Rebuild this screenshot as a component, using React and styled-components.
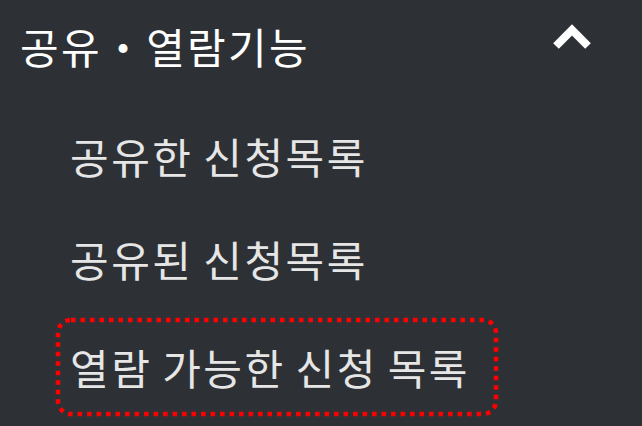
import React from "react";
import styled, { createGlobalStyle } from "styled-components";

const GlobalStyle = createGlobalStyle`
  html, body {
    margin: 0;
    padding: 0;
    background: #2d3135;
  }
  body {
    font-family: "Noto Sans CJK KR", "Noto Sans", sans-serif;
  }
`;

const Menu = styled.nav`
  width: 642px;
  height: 426px;
  background: #2d3135;
  overflow: hidden;
`;

const Header = styled.div`
  display: flex;
  align-items: center;
  justify-content: space-between;
  height: 92px;
  padding: 0 50px 0 20px;
`;

const Title = styled.span`
  color: #ffffff;
  font-size: 42px;
  line-height: 1;
  letter-spacing: 2.3px;
`;

const Chevron = styled.svg`
  width: 40px;
  height: 30px;
  margin-bottom: 22px;
`;

const List = styled.ul`
  list-style: none;
  margin: 0;
  padding: 12px 0 0 56px;
`;

const Item = styled.li`
  position: relative;
  box-sizing: border-box;
  display: flex;
  align-items: center;
  width: 442px;
  height: ${p => (p.$active ? "98px" : "103px")};
  margin-top: ${p => (p.$active ? "8px" : "0")};
  padding-left: 14px;
  color: #e6e6e6;
  font-size: 42px;
  line-height: 1;
  letter-spacing: 2.5px;
  word-spacing: -2px;
  white-space: pre;
`;

const Dotted = styled.svg`
  position: absolute;
  inset: 0;
  width: 100%;
  height: 100%;
  pointer-events: none;
  overflow: visible;
`;

export default function App() {
  return (
    <Menu>
      <GlobalStyle />
      <Header>
        <Title>공유・열람기능</Title>
        <Chevron viewBox="0 0 40 30">
          <polyline
            points="4,26 20,10 36,26"
            fill="none"
            stroke="#ffffff"
            strokeWidth="8"
            strokeLinejoin="miter"
          />
        </Chevron>
      </Header>
      <List>
        <Item>공유한 신청목록</Item>
        <Item>공유된 신청목록</Item>
        <Item $active>
          열람 가능한 신청 목록
          <Dotted>
            <rect
              x="2"
              y="2"
              width="438"
              height="94"
              rx="13"
              fill="none"
              stroke="#ff0000"
              strokeWidth="4.5"
              strokeDasharray="4.5 5"
            />
          </Dotted>
        </Item>
      </List>
    </Menu>
  );
}
